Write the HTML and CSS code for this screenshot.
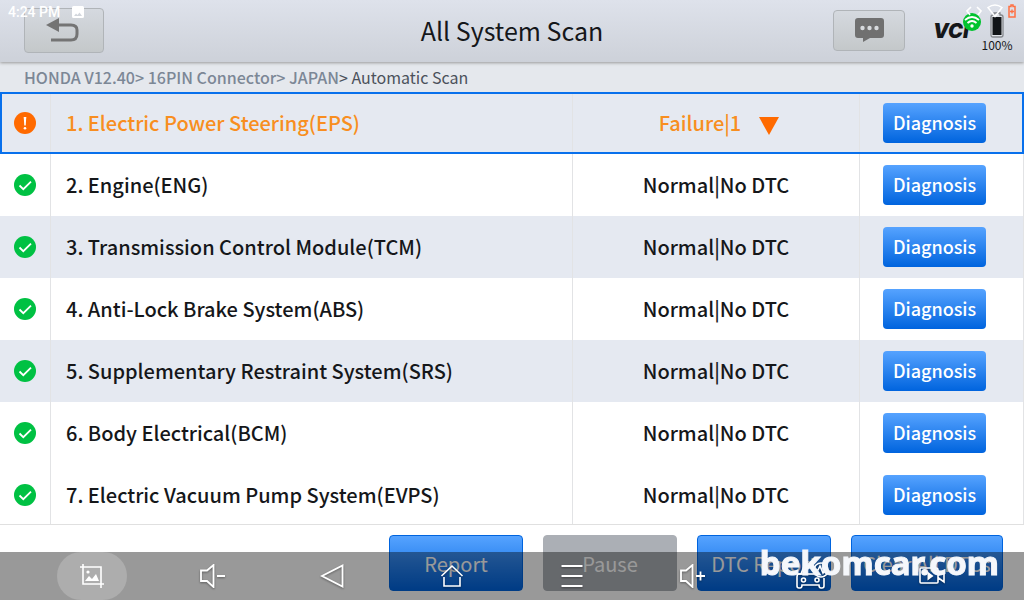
FILE: index.html
```html
<!DOCTYPE html>
<html lang="en">
<head>
<meta charset="utf-8">
<title>All System Scan</title>
<link rel="stylesheet" href="styles.css">
</head>
<body>
<svg class="defs" aria-hidden="true">
  <symbol id="ok" viewBox="0 0 22 22"><circle cx="11" cy="11" r="11" fill="#00c143"/><path d="M5.5 11.5l3.8 3.7L17 7.6" fill="none" stroke="#fff" stroke-width="1.8"/></symbol>
</svg>
<div class="screen">
  <header class="topbar">
    <div class="side">
      <button class="tool back" aria-label="Back"><svg width="36" height="26" viewBox="0 0 36 26"><path d="M13 8h12q6 0 6 5v4q0 6-6 6H5" fill="none" stroke="#747474" stroke-width="3"/><path d="M0 8L13 1v14z" fill="#747474"/></svg></button>
    </div>
    <h1>All System Scan</h1>
    <div class="side right">
      <button class="tool chat" aria-label="Messages"><svg width="29" height="24" viewBox="0 0 29 24"><path d="M3 0h23q3 0 3 3v14q0 3-3 3H15l-7 4v-4H3q-3 0-3-3V3q0-3 3-3z" fill="#707070"/><g fill="#d7dadd"><circle cx="7.500" cy="10" r="2.200"/><circle cx="14.500" cy="10" r="2.200"/><circle cx="21.500" cy="10" r="2.200"/></g></svg></button>
      <svg class="vci" width="48" height="34" viewBox="0 0 48 34"><text x="0" y="28">VCI</text><circle cx="39" cy="12" r="9" fill="#00c32e"/><g fill="none" stroke="#fff" stroke-width="1.800"><path d="M32 10q7-6 14 0M34.500 13q4.500-4 9 0"/></g><circle cx="39" cy="16" r="1.700" fill="#fff"/></svg>
      <div class="battery"><svg width="14" height="26" viewBox="0 0 14 26"><path d="M4 1h6v2h1q2 0 2 2v18q0 2-2 2H3q-2 0-2-2V5q0-2 2-2h1z" fill="#dfe2e7" stroke="#85888d" stroke-width="1.300"/><path d="M2.500 5h9v18h-9z" fill="#111417"/></svg><span>100%</span></div>
    </div>
  </header>
  <nav class="crumbs">HONDA V12.40&gt; 16PIN Connector&gt; JAPAN<span>&gt; Automatic Scan</span></nav>
  <main class="list">
    <table>
      <tbody>
        <tr class="active"><td class="state"><svg width="22" height="22" viewBox="0 0 22 22"><circle cx="11" cy="11" r="11" fill="#ff6a00"/><path d="M9.700 5h2.600l-.6 8.500h-1.400z" fill="#fff"/><circle cx="11" cy="16.200" r="1.300" fill="#fff"/></svg></td><td>1. Electric Power Steering(EPS)</td><td class="result">Failure|1<svg class="arrow" width="20" height="18" viewBox="0 0 20 18"><path d="M0 0h20L10 18z" fill="#ff6a00"/></svg></td><td class="action"><button class="blue">Diagnosis</button></td></tr>
        <tr><td class="state"><svg width="22" height="22"><use href="#ok"/></svg></td><td>2. Engine(ENG)</td><td class="result">Normal|No DTC</td><td class="action"><button class="blue">Diagnosis</button></td></tr>
        <tr class="tint"><td class="state"><svg width="22" height="22"><use href="#ok"/></svg></td><td>3. Transmission Control Module(TCM)</td><td class="result">Normal|No DTC</td><td class="action"><button class="blue">Diagnosis</button></td></tr>
        <tr><td class="state"><svg width="22" height="22"><use href="#ok"/></svg></td><td>4. Anti-Lock Brake System(ABS)</td><td class="result">Normal|No DTC</td><td class="action"><button class="blue">Diagnosis</button></td></tr>
        <tr class="tint"><td class="state"><svg width="22" height="22"><use href="#ok"/></svg></td><td>5. Supplementary Restraint System(SRS)</td><td class="result">Normal|No DTC</td><td class="action"><button class="blue">Diagnosis</button></td></tr>
        <tr><td class="state"><svg width="22" height="22"><use href="#ok"/></svg></td><td>6. Body Electrical(BCM)</td><td class="result">Normal|No DTC</td><td class="action"><button class="blue">Diagnosis</button></td></tr>
        <tr><td class="state"><svg width="22" height="22"><use href="#ok"/></svg></td><td>7. Electric Vacuum Pump System(EVPS)</td><td class="result">Normal|No DTC</td><td class="action"><button class="blue">Diagnosis</button></td></tr>
      </tbody>
    </table>
  </main>
  <footer class="actions">
    <button class="blue">Report</button>
    <button class="blue" disabled>Pause</button>
    <button class="blue">DTC Report</button>
    <button class="blue wide">Clear All DTCs</button>
  </footer>
</div>

<div class="status left"><span>4:24 PM</span><svg width="12" height="12" viewBox="0 0 12 12"><path d="M1.500 0h9Q12 0 12 1.500v9q0 1.500-1.500 1.500h-9Q0 12 0 10.500v-9Q0 0 1.500 0zM2 10h8L7.500 6.500l-2 2.500L4 7.500z" fill="#fff" fill-rule="evenodd"/></svg></div>
<div class="status end"><svg width="16" height="12" viewBox="0 0 16 12" fill="none" stroke="#fff" stroke-width="1.600"><path d="M5 2L1 6l3 4M11 2l4 4-3 4"/></svg><svg width="16" height="14" viewBox="0 0 16 14"><path d="M1 3.500q7-5 14 0L8 12.500z" fill="none" stroke="#fff" stroke-width="1.500"/></svg><svg width="8" height="14" viewBox="0 0 8 14"><path d="M1 2.500h2V1h2v1.500h2V13H1z" fill="none" stroke="#ff7043" stroke-width="1.500"/><path d="M4 5.500v4M2 7.500h4" stroke="#ff7043" stroke-width="1.300"/></svg></div>

<nav class="sysbar" aria-label="System">
  <button class="round" aria-label="Screenshot"><svg width="24" height="24" viewBox="0 0 24 24"><path d="M3 0v20h21M0 3h21v21" fill="none" stroke="#fff" stroke-width="1.600"/><circle cx="8" cy="8" r="1.600" fill="#fff"/><path d="M5 17l4-5 3 3 4-5 3 7z" fill="#fff"/></svg></button>
  <button aria-label="Volume down"><svg width="26" height="24" viewBox="0 0 26 24"><path d="M2 6.500h6L14.500 1v22L8 17H2zM18 12h8" fill="none" stroke="#fff" stroke-width="1.800"/></svg></button>
  <button aria-label="Back"><svg width="24" height="24" viewBox="0 0 24 24"><path d="M22.500 1.500v21L2 12z" fill="none" stroke="#fff" stroke-width="1.800"/></svg></button>
  <button aria-label="Home"><svg width="24" height="24" viewBox="0 0 24 24"><path d="M1.500 12L12 2l10.500 10M4 13v9h16v-9" fill="none" stroke="#fff" stroke-width="1.600"/></svg></button>
  <button aria-label="Menu"><svg width="24" height="24" viewBox="0 0 24 24"><path d="M1.500 2h21M1.500 12h21M1.500 22h21" stroke="#fff" stroke-width="2"/></svg></button>
  <button aria-label="Volume up"><svg width="26" height="24" viewBox="0 0 26 24"><path d="M2 6.500h5L13.500 1v22L7 17H2zM17 12h9M21.500 7.500v9" fill="none" stroke="#fff" stroke-width="1.800"/></svg></button>
  <button aria-label="Vehicle"><svg width="34" height="28" viewBox="0 0 34 28"><g fill="none" stroke="#fff" stroke-width="1.600"><path d="M18 4H9l-3 8H4q-2 0-2 3v9q0 2 2 2h1q2 0 2-3h17q0 3 2 3h1q2 0 2-2V16"/><circle cx="8.500" cy="18" r="2"/><circle cx="22" cy="18" r="2"/><path d="M3 12h16"/><circle cx="26" cy="8" r="7"/><path d="M20 8h3l2-4 3 7 2-3h3"/></g></svg></button>
  <button aria-label="Record"><svg width="26" height="24" viewBox="0 0 26 24"><path d="M1 5q0-1 1-1h15q2 0 2 2v12q0 1-1 1H2q-1 0-1-1zM19.500 11L25 7v11l-5.500-4" fill="none" stroke="#fff" stroke-width="1.600"/><path d="M8.500 7.500l6 4.500-6 4.500z" fill="#fff"/></svg></button>
</nav>
<div class="watermark">bekomcar.com</div>
</body>
</html>
```
FILE: styles.css
```css
* { box-sizing: border-box; }
body {
  margin: 0;
  font-family: "Noto Sans CJK SC", "Noto Sans", sans-serif;
  font-weight: 400;
  color: #15171a;
}
button { font: inherit; border: 0; padding: 0; }
svg { display: block; flex: none; }
.defs { position: absolute; width: 0; height: 0; }
.screen { display: flex; flex-direction: column; height: 100vh; background: #e5e8ed; overflow: hidden; }

.topbar {
  display: flex;
  align-items: center;
  flex: none;
  height: 62px;
  padding: 0 11px 2px;
  background: linear-gradient(#dee2eb, #cdd1d9);
  box-shadow: 0 1px 3px #999;
}
.topbar h1 { margin: 0; font-size: 25px; line-height: 40px; font-weight: 400; }
.side { display: flex; flex: 1; align-items: center; }
.side.right { justify-content: flex-end; }
.tool {
  display: grid;
  place-items: center;
  border: 1px solid #b0b4b8;
  border-radius: 4px;
  background: linear-gradient(#d5d9df, #c4c8ca);
}
.back { width: 80px; height: 45px; margin-left: 13px; }
.chat { width: 72px; height: 41px; }
.vci { margin-left: 28px; margin-bottom: 6px; }
.vci text { font: italic 900 20px Inter, sans-serif; fill: #15171a; }
.battery { display: flex; flex-direction: column; align-items: center; width: 32px; padding-top: 4px; }
.battery span { font-size: 12px; line-height: 14px; }

.crumbs { flex: none; height: 30px; padding: 0 24px; font-size: 16px; line-height: 30px; font-weight: 500; color: #7c8796; }
.crumbs span { color: #4b515b; font-weight: 400; }

.list { flex: 1; min-height: 0; overflow: hidden; background: #fff; border-bottom: 1px solid #e0e0e0; }
table { width: 100%; border-collapse: separate; border-spacing: 0; table-layout: auto; font-size: 20px; font-weight: 500; line-height: 28px; }
td { height: 62px; padding: 0 0 0 15px; border-right: 1px solid #e2e3e5; }
td.state { width: 51px; padding: 0 14px; }
td.result { width: 287px; padding: 0; text-align: center; }
td.action { width: 164px; padding: 0 14px 0 0; }
.action .blue { display: block; margin: 0 auto; padding-bottom: 2px; }
tr.active, tr.tint { background: #e5e9f1; }
tr.active { color: #f88e20; outline: 2px solid #0870ec; outline-offset: -2px; }
tr.active .result { padding-left: 6px; }
.arrow { display: inline-block; vertical-align: middle; margin-left: 18px; }

.blue {
  width: 103px;
  height: 40px;
  border-radius: 4px;
  font-size: 18px;
  font-weight: 500;
  color: #fff;
  background: linear-gradient(#56a3ff, #0064de);
}
.actions { display: flex; flex: none; justify-content: flex-end; gap: 20px; height: 75px; padding: 10px 21px 9px 0; background: #fff; }
.actions .blue { width: 134px; height: 56px; font-size: 20px; font-weight: 400; border: 1px solid #0064de; }
.actions .wide { width: 152px; }
.actions .blue:disabled { background: #abafb5; border-color: #abafb5; }

.status { position: absolute; top: 4px; display: flex; align-items: center; color: #fff; }
.status.left { left: 8px; gap: 12px; font: 500 14px/16px Roboto, sans-serif; }
.status.end { right: 8px; gap: 5px; }

.sysbar {
  position: fixed;
  left: 0;
  right: 0;
  bottom: 0;
  display: flex;
  justify-content: space-between;
  height: 48px;
  padding: 0 57px;
  background: rgba(0, 0, 0, .4);
}
.sysbar button { display: grid; place-items: center; width: 70px; background: none; filter: drop-shadow(0 1px 1px #0006); }
.sysbar .round { border-radius: 24px; background: #adadad; filter: none; }
.watermark {
  position: fixed;
  right: 25px;
  bottom: 17px;
  font: 700 33px/40px "Noto Sans", sans-serif;
  color: #f5f7fb;
  -webkit-text-stroke: 1px #f5f7fb;
}
```
